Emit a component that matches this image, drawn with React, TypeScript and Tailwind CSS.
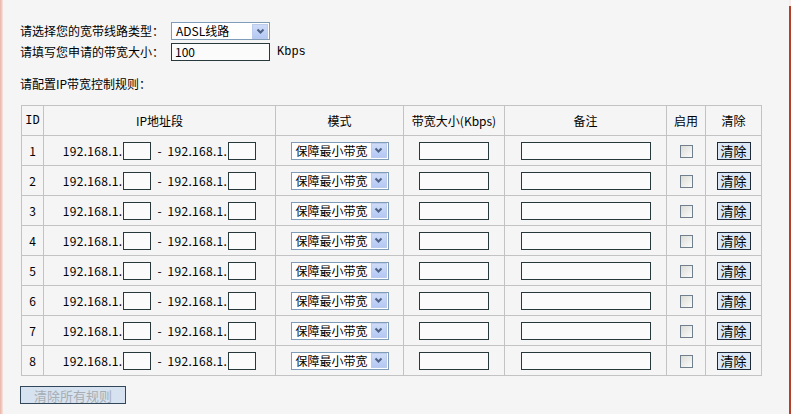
import React from "react";

const font = { fontFamily: '"Noto Sans CJK SC", "Noto Sans", sans-serif' };

function Chevron() {
  return (
    <svg width="9" height="7" viewBox="0 0 9 7">
      <path d="M1.5 1.5 L4.5 4.5 L7.5 1.5" fill="none" stroke="#4d6185" strokeWidth="2" />
    </svg>
  );
}

function FakeSelect({ label, width }: { label: string; width: string }) {
  return (
    <div className={`${width} h-[18px] border border-[#7f9db9] bg-white flex items-center justify-between pl-[4px] pr-[1px]`}>
      <span className="text-[12px] leading-none text-black whitespace-nowrap">{label}</span>
      <span className="shrink-0 w-[16px] h-[15px] bg-gradient-to-b from-[#cfdcf8] to-[#b4c8f3] border border-[#bccbeb] flex items-center justify-center">
        <Chevron />
      </span>
    </div>
  );
}

function TextBox({ width }: { width: string }) {
  return <div className={`${width} h-[18px] border border-[#27393a] bg-[#fbfbfb]`} />;
}

const rows = [1, 2, 3, 4, 5, 6, 7, 8];

export default function App() {
  return (
    <div className="w-[791px] h-[414px] bg-[#f5f5f5] flex text-[12px] text-black overflow-hidden" style={font}>
      <div className="w-[3px] h-full bg-gradient-to-r from-[#e9b3a6] to-[#f6e4df]" />

      <div className="flex-1 pt-[21px]">
        {/* 线路类型 */}
        <div className="flex items-center h-[20px] pl-[17px]">
          <span className="w-[151px] leading-none">请选择您的宽带线路类型：</span>
          <FakeSelect label="ADSL线路" width="w-[99px]" />
        </div>
        <div className="flex items-center h-[20px] pl-[17px] mt-[1px]">
          <span className="w-[151px] leading-none">请填写您申请的带宽大小：</span>
          <div className="w-[99px] h-[18px] border border-[#27393a] bg-[#fbfbfb] flex items-center pl-[3px] text-[12px] leading-none">
            100
          </div>
          <span className="ml-[7px] leading-none" style={{ fontFamily: '"Liberation Mono", monospace', fontSize: "12px" }}>
            Kbps
          </span>
        </div>

        <div className="pl-[17px] mt-[16px] leading-none h-[12px]">请配置IP带宽控制规则：</div>

        {/* 规则表 */}
        <table className="ml-[18px] mt-[15px] border-collapse table-fixed w-[740px]">
          <colgroup>
            <col className="w-[22px]" />
            <col className="w-[232px]" />
            <col className="w-[128px]" />
            <col className="w-[101px]" />
            <col className="w-[162px]" />
            <col className="w-[39px]" />
            <col className="w-[56px]" />
          </colgroup>
          <thead>
            <tr className="h-[30px]">
              <th className="border border-[#c3c3c3] font-normal text-center p-0" style={{ fontFamily: '"Liberation Mono", monospace', fontSize: "12px" }}>ID</th>
              <th className="border border-[#c3c3c3] font-normal text-center p-0">IP地址段</th>
              <th className="border border-[#c3c3c3] font-normal text-center p-0">模式</th>
              <th className="border border-[#c3c3c3] font-normal text-center p-0">带宽大小(Kbps)</th>
              <th className="border border-[#c3c3c3] font-normal text-center p-0">备注</th>
              <th className="border border-[#c3c3c3] font-normal text-center p-0">启用</th>
              <th className="border border-[#c3c3c3] font-normal text-center p-0">清除</th>
            </tr>
          </thead>
          <tbody>
            {rows.map((n) => (
              <tr key={n} className="h-[30px]">
                <td className="border border-[#c3c3c3] text-center p-0">{n}</td>
                <td className="border border-[#c3c3c3] p-0">
                  <div className="flex items-center justify-center">
                    <span className="mr-[1px] tracking-[0.3px]">192.168.1.</span>
                    <TextBox width="w-[28px]" />
                    <span className="mx-[6px]">-</span>
                    <span className="mr-[1px] tracking-[0.3px]">192.168.1.</span>
                    <TextBox width="w-[28px]" />
                  </div>
                </td>
                <td className="border border-[#c3c3c3] p-0">
                  <div className="flex justify-center">
                    <FakeSelect label="保障最小带宽" width="w-[98px]" />
                  </div>
                </td>
                <td className="border border-[#c3c3c3] p-0">
                  <div className="flex justify-center">
                    <TextBox width="w-[70px]" />
                  </div>
                </td>
                <td className="border border-[#c3c3c3] p-0">
                  <div className="flex justify-center">
                    <TextBox width="w-[130px]" />
                  </div>
                </td>
                <td className="border border-[#c3c3c3] p-0">
                  <div className="flex justify-center pt-[2px]">
                    <div className="w-[13px] h-[13px] border border-[#6f7f8e] bg-gradient-to-br from-[#dcdcd7] to-[#fbfbfb]" />
                  </div>
                </td>
                <td className="border border-[#c3c3c3] p-0">
                  <div className="flex justify-center">
                    <div className="w-[34px] h-[18px] border border-[#1f2a38] bg-[#dbe7f5] flex items-center justify-center text-[13px] leading-none">
                      清除
                    </div>
                  </div>
                </td>
              </tr>
            ))}
          </tbody>
        </table>

        <div className="ml-[17px] mt-[10px] w-[106px] h-[18px] border border-[#33475a] bg-[#d6e2ef] flex items-center justify-center text-[13px] leading-none text-[#a7adb3]">
          清除所有规则
        </div>
      </div>

      <div className="w-[2px] h-full pt-[6px] bg-[#f8ebe8]">
        <div className="w-[2px] h-full bg-[#b3402a]" />
      </div>
    </div>
  );
}
